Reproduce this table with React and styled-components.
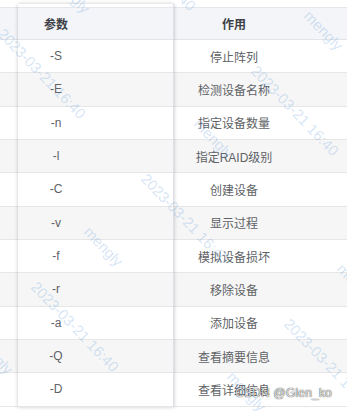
import React from 'react';
import styled, { createGlobalStyle } from 'styled-components';

const GlobalStyle = createGlobalStyle`
  html, body {
    margin: 0;
    padding: 0;
    background: #fff;
  }
  body {
    font-family: "Liberation Sans", "Noto Sans CJK SC", sans-serif;
  }
`;

const rows = [
  ['-S', '停止阵列'],
  ['-E', '检测设备名称'],
  ['-n', '指定设备数量'],
  ['-l', '指定RAID级别'],
  ['-C', '创建设备'],
  ['-v', '显示过程'],
  ['-f', '模拟设备损坏'],
  ['-r', '移除设备'],
  ['-a', '添加设备'],
  ['-Q', '查看摘要信息'],
  ['-D', '查看详细信息'],
];

// watermark tiles on a skewed lattice
const marks = [];
for (let i = -1; i <= 1; i++) {
  for (let j = -3; j <= 3; j++) {
    const x = 143 + i * 253 - j * 110;
    const y = 170 + i * 37 + j * 108;
    if (x > -160 && x < 360 && y > -200 && y < 480) marks.push({ x, y, key: `${i}_${j}` });
  }
}

export default function App() {
  return (
    <>
      <GlobalStyle />
      <Page>
        <Table>
          <Column width="18px">
            <HeadCell />
            {rows.map((r, i) => <Cell key={i} />)}
          </Column>
          <FrozenColumn>
            <HeadCell $pr="79px">参数</HeadCell>
            {rows.map((r, i) => <Cell key={i} $pr="79px">{r[0]}</Cell>)}
          </FrozenColumn>
          <Column $grow>
            <HeadCell $pr="53px">作用</HeadCell>
            {rows.map((r, i) => <Cell key={i} $pr="53px">{r[1]}</Cell>)}
          </Column>
        </Table>
        <Watermarks>
          {marks.map((m) => (
            <React.Fragment key={m.key}>
              <Mark style={{ left: m.x + 60, top: m.y - 55 }}>mengly</Mark>
              <Mark style={{ left: m.x + 7, top: m.y }}>2023-03-21 16:40</Mark>
            </React.Fragment>
          ))}
        </Watermarks>
        <SiteMark>CSDN @Glen_ko</SiteMark>
      </Page>
    </>
  );
}

const Page = styled.div`
  position: relative;
  width: 347px;
  height: 411px;
  overflow: hidden;
  background: #fff;
`;

const Table = styled.div`
  display: flex;
  align-items: flex-start;
  padding-top: 7px;
  font-size: 12px;
  color: #606266;
`;

const Column = styled.div`
  display: flex;
  flex-direction: column;
  width: ${(p) => p.width || 'auto'};
  flex: ${(p) => (p.$grow ? '1' : 'none')};
`;

const FrozenColumn = styled(Column)`
  position: relative;
  z-index: 1;
  width: 155px;
  margin-top: -3px;
  padding-top: 3px;
  background: #fff;
  border-right: 1px solid #dcdfe6;
  box-shadow: 0 0 4px rgba(0, 0, 0, 0.22);
`;

const HeadCell = styled.div`
  box-sizing: border-box;
  height: 33px;
  display: flex;
  align-items: center;
  justify-content: center;
  padding-right: ${(p) => p.$pr || '0'};
  background: #f3f5f8;
  border-top: 1px solid #e4e7ec;
  border-bottom: 1px solid #e2e4e8;
  font-weight: 700;
  color: #3d4047;
`;

const Cell = styled.div`
  box-sizing: border-box;
  height: 33.33px;
  display: flex;
  align-items: center;
  justify-content: center;
  padding-right: ${(p) => p.$pr || '0'};
  border-bottom: 1px solid #e6e6e6;
  background: #fff;
  white-space: nowrap;

  &:nth-child(odd) {
    background: #f6f6f6;
  }
`;

const Watermarks = styled.div`
  position: absolute;
  inset: 0;
  z-index: 2;
  pointer-events: none;
`;

const Mark = styled.span`
  position: absolute;
  transform-origin: 0 0;
  transform: rotate(46deg);
  white-space: nowrap;
  font-size: 15px;
  line-height: 18px;
  color: rgba(80, 145, 215, 0.24);
`;

const SiteMark = styled.div`
  position: absolute;
  right: 15px;
  bottom: 11px;
  z-index: 3;
  font-size: 12px;
  letter-spacing: 0.2px;
  color: rgba(255, 255, 255, 0.85);
  text-shadow: 0 0 1px rgba(0, 0, 0, 0.75), 0 0 1px rgba(0, 0, 0, 0.5);
`;
